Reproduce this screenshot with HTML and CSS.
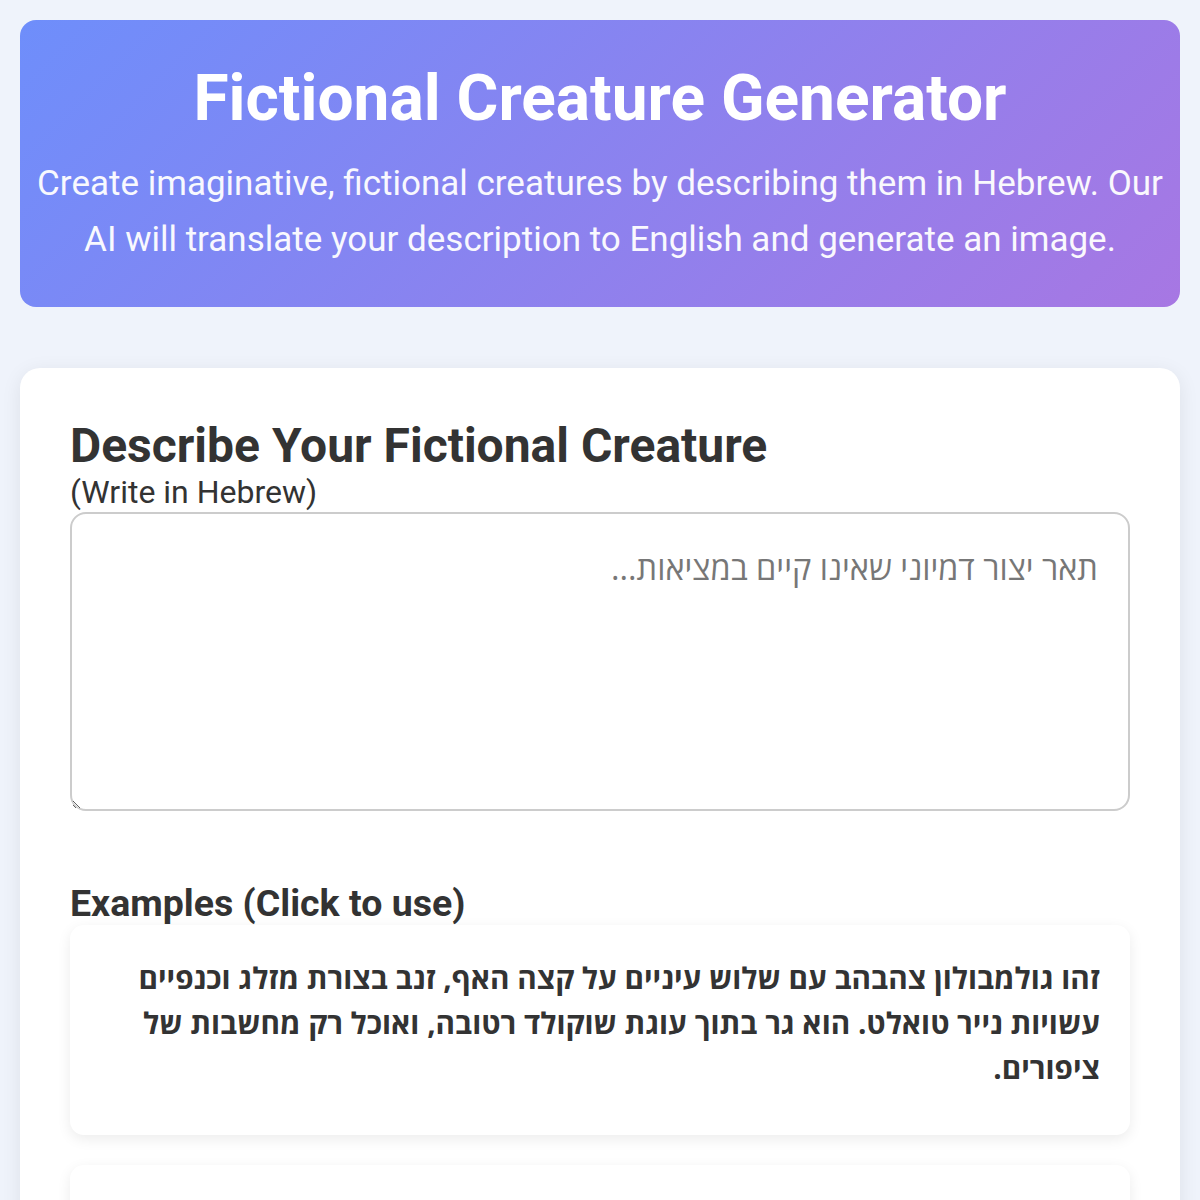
FILE: index.html
```html
<!DOCTYPE html>
<html lang="en">
<head>
<meta charset="utf-8">
<title>Fictional Creature Generator</title>
<link rel="stylesheet" href="styles.css">
</head>
<body>
<div class="page">
  <header class="hero">
    <h1 class="hero-title">Fictional Creature Generator</h1>
    <p class="hero-sub">Create imaginative, fictional creatures by describing them in Hebrew. Our AI will translate your description to English and generate an image.</p>
  </header>

  <main class="card">
    <h2 class="card-title">Describe Your Fictional Creature</h2>
    <div class="card-hint">(Write in Hebrew)</div>
    <textarea class="desc" dir="rtl" placeholder="תאר יצור דמיוני שאינו קיים במציאות..."></textarea>

    <h3 class="examples-title">Examples (Click to use)</h3>
    <div class="examples">
      <div class="example" dir="rtl">זהו גולמבולון צהבהב עם שלוש עיניים על קצה האף, זנב בצורת מזלג וכנפיים עשויות נייר טואלט. הוא גר בתוך עוגת שוקולד רטובה, ואוכל רק מחשבות של ציפורים.</div>
      <div class="example" dir="rtl">זהו פרפרון כחלחל עם שש רגליים עשויות ספגטי, אוזניים בצורת מטריות וזנב של שעון מעורר. הוא ישן בתוך כוס תה קרה ושר רק בימי שלישי.</div>
    </div>
  </main>
</div>
</body>
</html>
```

FILE: styles.css
```css
html, body {
  margin: 0;
  padding: 0;
}
body {
  background: #eff3fb;
  font-family: "Roboto", "Open Sans", sans-serif;
  color: #333;
}
.page {
  padding: 20px;
}
.hero {
  background: linear-gradient(135deg, #6e8efb 0%, #a777e3 100%);
  border-radius: 16px;
  color: #fff;
  text-align: center;
  padding: 41px 12px 39px;
  margin-bottom: 61px;
}
.hero-title {
  margin: 0 0 18px;
  font-size: 64px;
  font-weight: 700;
  line-height: 1.2;
}
.hero-sub {
  margin: 0;
  font-size: 35px;
  font-weight: 400;
  line-height: 56px;
  opacity: 0.95;
}
.card {
  background: #fff;
  border-radius: 20px;
  box-shadow: 0 4px 20px rgba(0, 0, 0, 0.08);
  padding: 50px;
}
.card-title {
  margin: 0;
  font-size: 48px;
  font-weight: 700;
  line-height: 56px;
  color: #333;
}
.card-hint {
  font-size: 32px;
  line-height: 40px;
  margin-top: -2px;
  color: #333;
}
.desc {
  display: block;
  box-sizing: border-box;
  width: 100%;
  height: 299px;
  margin: 0 0 71px;
  padding: 31px 30px;
  border: 2px solid #ccc;
  border-radius: 16px;
  font-family: "Open Sans", sans-serif;
  font-size: 32.5px;
  color: #333;
  resize: vertical;
}
.desc::placeholder {
  color: #777;
}
.examples-title {
  margin: 0;
  font-size: 37.5px;
  font-weight: 700;
  line-height: 42px;
  color: #333;
}
.examples {
  display: flex;
  flex-direction: column;
  gap: 30px;
  margin-top: 1px;
}
.example {
  background: #fff;
  border-radius: 14px;
  box-shadow: 0 4px 14px rgba(0, 0, 0, 0.08);
  padding: 30px 30px 45px;
  font-family: "Open Sans", sans-serif;
  font-size: 29.7px;
  font-weight: 700;
  line-height: 45px;
  color: #333;
  cursor: pointer;
}
```
